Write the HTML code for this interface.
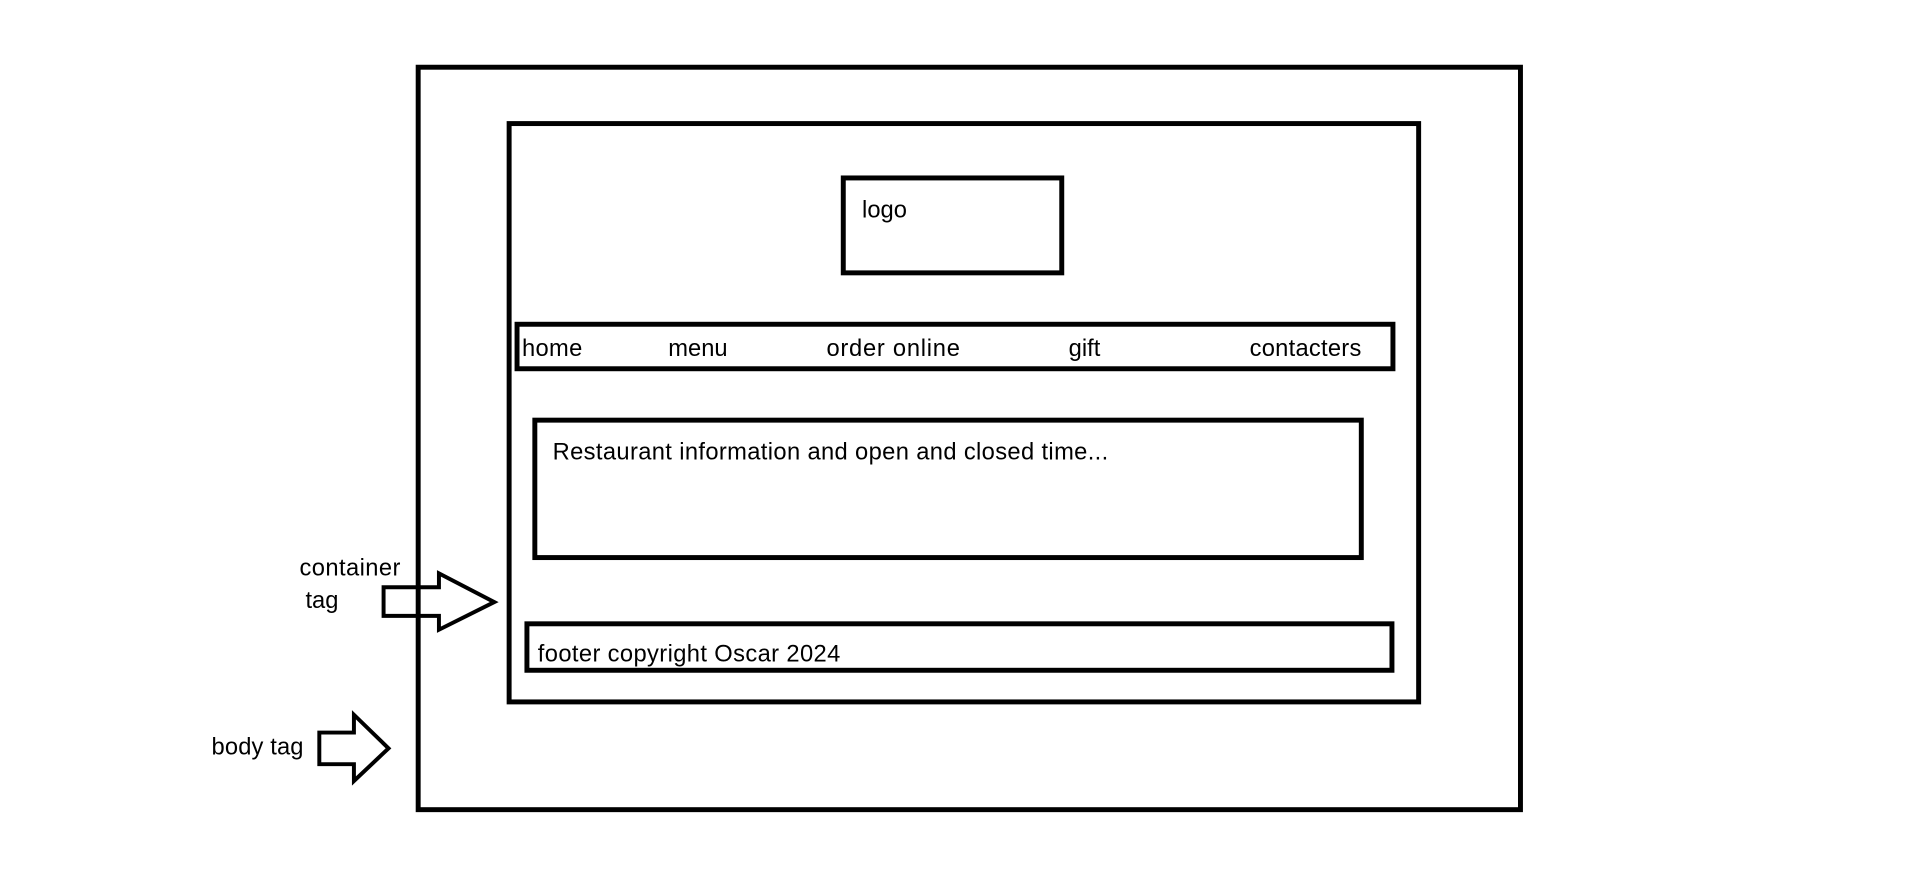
<!DOCTYPE html>
<html><head><meta charset="utf-8"><style>
html,body{margin:0;padding:0;background:#fff;width:1926px;height:886px;overflow:hidden}
svg text{font-family:"Liberation Sans",sans-serif;font-size:24px;fill:#000}
</style></head><body>
<svg width="1926" height="886" viewBox="0 0 1926 886" xmlns="http://www.w3.org/2000/svg">
<g transform="scale(0.9886)">
<g fill="none" stroke="#000" stroke-width="5">
<rect x="423" y="68" width="1115" height="751"/>
<rect x="515" y="125" width="920" height="585"/>
<rect x="853" y="180" width="221" height="96"/>
<rect x="523" y="328" width="886" height="45"/>
<rect x="541" y="425" width="836" height="139"/>
<rect x="533" y="631" width="875" height="47"/>
<path d="M388 594 H444 V580 L500 609 L444 637 V623 H388 Z" stroke-width="4"/>
<path d="M323 741 H358 V723 L393 757 L358 790 V773 H323 Z" stroke-width="4"/>
</g>
<text x="872" y="220">logo</text>
<text x="528" y="360" textLength="61">home</text>
<text x="676" y="360">menu</text>
<text x="836" y="360" textLength="135">order online</text>
<text x="1081" y="360">gift</text>
<text x="1264" y="360" textLength="113">contacters</text>
<text x="559" y="465" textLength="562">Restaurant information and open and closed time...</text>
<text x="544" y="669" textLength="306">footer copyright Oscar 2024</text>
<text x="303" y="582" textLength="102">container</text>
<text x="309" y="615">tag</text>
<text x="214" y="763" textLength="93">body tag</text>
</g>
</svg>
</body></html>
